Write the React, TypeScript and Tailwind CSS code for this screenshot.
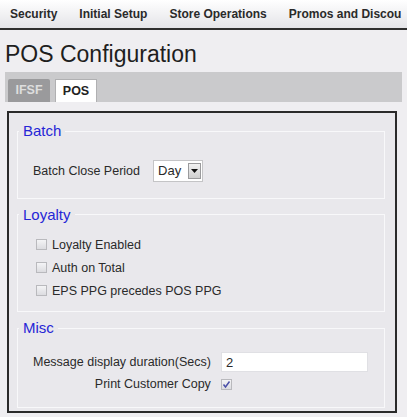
const font = { fontFamily: '"Liberation Sans", Arial, sans-serif' }

function Check({ checked }: { checked?: boolean }) {
  return (
    <span className="inline-flex h-[11px] w-[11px] shrink-0 items-center justify-center border border-[#b9b9bd] bg-gradient-to-b from-[#f4f4f6] to-[#dcdce0]">
      {checked && (
        <svg width="9" height="9" viewBox="0 0 9 9">
          <path d="M1.5 4.5 L3.5 7 L7.5 1.5" fill="none" stroke="#4a4fa8" strokeWidth="1.5" />
        </svg>
      )}
    </span>
  )
}

function Section({ title, children, className }: { title: string; children: React.ReactNode; className?: string }) {
  return (
    <fieldset className={`min-w-0 border border-[#f8f8fa] px-[14px] ${className ?? ''}`}>
      <legend className="ml-[-13px] px-[4px] text-[15px] leading-[18px] text-[#2626d6]">{title}</legend>
      {children}
    </fieldset>
  )
}

export default function App() {
  return (
    <div className="h-[417px] w-[407px] overflow-hidden bg-[#efeef1] text-[12.5px] text-[#2a2a2a]" style={font}>
      <div className="flex h-[30px] items-center gap-[22px] overflow-hidden border-b-2 border-[#2e2e2e] bg-gradient-to-b from-white to-[#e4e4e8] pl-[10px] text-[12px] font-bold whitespace-nowrap">
        <span>Security</span>
        <span>Initial Setup</span>
        <span>Store Operations</span>
        <span>Promos and Discou</span>
      </div>

      <h1 className="mt-[9px] pl-[5px] text-[23px] leading-[30px] text-[#1e1e1e]">POS Configuration</h1>

      <div className="mx-[5px] mt-[3px] flex h-[30px] items-end gap-[5px] bg-[#cacacc] pl-[3px]">
        <div className="flex h-[23px] w-[42px] items-center justify-center rounded-t-[2px] bg-[#9a9a9c] font-bold text-[#dedede]">IFSF</div>
        <div className="flex h-[23px] w-[42px] items-center justify-center border border-b-0 border-[#b0b0b2] bg-white font-bold text-[#222]">POS</div>
      </div>

      <div className="mx-[7px] mt-[9px] flex h-[302px] w-[390px] flex-col gap-[7px] border-2 border-[#2a2a2a] bg-[#e9e8ec] pt-[9px] pr-[10px] pb-[3px] pl-[8px]">
        <Section title="Batch" className="h-[78px]">
          <div className="mt-[20px] flex items-center gap-[13px] pl-[1px]">
            <span>Batch Close Period</span>
            <div className="flex h-[22px] w-[50px] items-center justify-between border border-[#c4c4c6] bg-white pl-[4px] pr-[1px]">
              <span className="text-[13px]">Day</span>
              <span className="flex h-[16px] w-[13px] items-center justify-center border border-[#9a9a9c] bg-gradient-to-b from-[#f2f2f2] to-[#cfcfcf]">
                <svg width="7" height="4" viewBox="0 0 7 4"><path d="M0 0 L7 0 L3.5 4 Z" fill="#111" /></svg>
              </span>
            </div>
          </div>
        </Section>

        <Section title="Loyalty" className="h-[108px]">
          <div className="mt-[13px] flex flex-col gap-[7px] pl-[4px] leading-[16px]">
            <label className="flex items-center gap-[5px]"><Check /><span>Loyalty Enabled</span></label>
            <label className="flex items-center gap-[5px]"><Check /><span>Auth on Total</span></label>
            <label className="flex items-center gap-[5px]"><Check /><span>EPS PPG precedes POS PPG</span></label>
          </div>
        </Section>

        <Section title="Misc" className="h-[90px]">
          <div className="mt-[15px] grid grid-cols-[auto_1fr] items-center gap-x-[10px] gap-y-[3px] pl-[1px] whitespace-nowrap">
            <span className="text-right">Message display duration(Secs)</span>
            <div className="flex h-[20px] w-[147px] items-center border border-[#e0e0e4] bg-white pl-[4px] text-[13px]">2</div>
            <span className="text-right">Print Customer Copy</span>
            <div className="flex items-center"><Check checked /></div>
          </div>
        </Section>
      </div>
    </div>
  )
}
